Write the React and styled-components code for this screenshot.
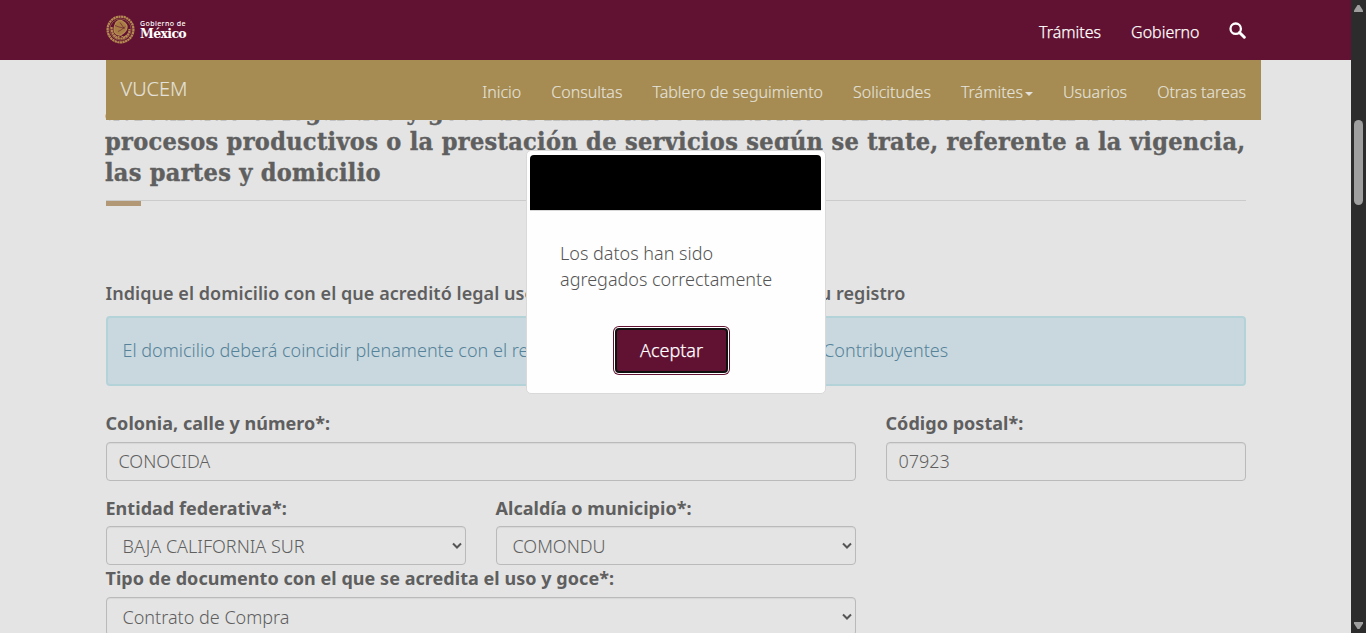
import React from "react";
import styled, { createGlobalStyle } from "styled-components";

const Global = createGlobalStyle`
  *, *::before, *::after { box-sizing: border-box; }
  html, body { margin: 0; padding: 0; overflow: hidden; }
  body { font-family: "Noto Sans", "Open Sans", sans-serif; font-weight: 300; font-size: 18px; color: #5f5f5f; background: #e4e4e4; }
`;

const Screen = styled.div`
  display: grid;
  grid-template-columns: 1fr 15px;
  height: 633px;
  overflow: hidden;
`;

const Page = styled.div`
  display: flex;
  flex-direction: column;
  height: 633px;
  overflow: hidden;
  background: #e4e4e4;
`;

const Header = styled.header`
  flex: none;
  height: 60px;
  background: #611232;
  color: #fff;
  display: flex;
  justify-content: space-between;
  padding: 0 105px 0 106px;
`;

const Brand = styled.a`
  display: flex;
  align-items: flex-start;
  gap: 5px;
  padding-top: 15px;
`;

const BrandName = styled.span`
  display: flex;
  flex-direction: column;
  padding-top: 5px;
  font-family: "DejaVu Serif", "Liberation Serif", serif;
  font-weight: 700;
  white-space: nowrap;
`;

const BrandSmall = styled.span`
  font-family: "Noto Sans", sans-serif;
  font-size: 7px;
  line-height: 8px;
  letter-spacing: 0.4px;
  font-weight: 500;
`;

const BrandLarge = styled.span`
  font-size: 12.5px;
  line-height: 11px;
  letter-spacing: -0.65px;
`;

const HeaderLinks = styled.nav`
  display: flex;
  gap: 30px;
  padding-top: 20px;
`;

const HeaderLink = styled.a`
  position: relative;
  left: 0.5px;
  font-size: 16px;
  line-height: 24px;
  font-weight: 300;
  white-space: nowrap;
  -webkit-text-stroke: 0.25px #fff;
`;

const SearchIcon = styled.svg`
  display: block;
  margin-top: 2px;
`;

const SubNav = styled.nav`
  flex: none;
  position: relative;
  z-index: 2;
  height: 60px;
  width: 1155px;
  margin-left: 106px;
  padding: 0 15px 0 14.5px;
  display: flex;
  justify-content: space-between;
  background: #a68b52;
  color: #e4e1da;
  -webkit-text-stroke: 0.15px #e4e1da;
`;

const SubBrand = styled.a`
  font-size: 20px;
  line-height: 28px;
  padding-top: 15px;
`;

const SubLinks = styled.div`
  display: flex;
  gap: 30px;
  padding-top: 20px;
`;

const SubLink = styled.a`
  display: flex;
  align-items: center;
  height: 24px;
  font-size: 16px;
  white-space: nowrap;
`;

const Caret = styled.span`
  margin: 3px 0 0 2px;
  border: 4px solid transparent;
  border-top-color: #e4e1da;
  border-bottom: 0;
`;

const Content = styled.main`
  width: 1140px;
  margin-left: 106px;
`;

const Heading = styled.h3`
  margin: -24px 0 0;
  padding-bottom: 12px;
  border-bottom: 1px solid #cbcbcb;
  font-family: "DejaVu Serif Condensed", "DejaVu Serif", serif;
  font-weight: 700;
  font-size: 25px;
  line-height: 31px;
  -webkit-text-stroke: 0.4px #5f5f5f;
`;

const HeadingLine = styled.span`
  display: block;
  white-space: nowrap;
  margin-left: -1px;
  letter-spacing: ${(p) => p.$track || 0}px;

  &:first-child {
    margin-bottom: -1px;
  }
`;

const Accent = styled.div`
  width: 35px;
  height: 5px;
  background: #b39875;
`;

const Subtitle = styled.p`
  margin: 74px 0 0 -0.5px;
  font-weight: 600;
  line-height: 26px;
  white-space: nowrap;
  letter-spacing: 0.045px;
`;

const Alert = styled.div`
  height: 70px;
  margin-top: 10px;
  padding: 19px 14.5px;
  border: 2px solid #b3d3d9;
  border-radius: 4px;
  background: #c9d8df;
  color: #568399;
  line-height: 26px;
  white-space: nowrap;
`;

const Row = styled.div`
  display: flex;
  gap: 30px;
  margin-top: ${(p) => p.$top}px;
`;

const Field = styled.div`
  display: flex;
  flex-direction: column;
  width: ${(p) => p.$w}px;
`;

const Label = styled.label`
  font-weight: 700;
  line-height: 26px;
  margin-left: -0.5px;
  margin-bottom: ${(p) => p.$gap || 6}px;
  white-space: nowrap;
  letter-spacing: 0.04px;
`;

const Control = styled.div`
  display: flex;
  align-items: center;
  justify-content: space-between;
  height: 39px;
  padding: 0 3px ${(p) => (p.$select ? 0 : 1)}px ${(p) => (p.$select ? 15.5 : 11.5)}px;
  border: 1px solid #bababa;
  border-radius: 4px;
  box-shadow: inset 0 1px 1px rgba(0, 0, 0, 0.06);
`;

const Scrollbar = styled.aside`
  height: 633px;
  background: #2c2c2c;
  display: flex;
  flex-direction: column;
  align-items: center;
  justify-content: space-between;
  padding: 5px 0 4px;
`;

const Thumb = styled.div`
  width: 9px;
  height: 85px;
  border-radius: 5px;
  background: #9f9f9f;
  margin: 108px 0 auto;
`;

const Modal = styled.section`
  position: absolute;
  z-index: 3;
  left: 526px;
  top: 150px;
  width: 300px;
  height: 244px;
  padding: 4px 4px 0 3px;
  border: 1px solid #d9d9d9;
  border-radius: 5px;
  background: #fefefe;
  display: flex;
  flex-direction: column;
`;

const ModalTitle = styled.div`
  height: 56px;
  border-radius: 4px 4px 0 0;
  border-bottom: 1px solid #d8d8d8;
  background: #000;
  background-clip: padding-box;
`;

const ModalText = styled.p`
  margin: 29px 0 0 30px;
  line-height: 26px;
  color: #555;
  white-space: nowrap;
`;

const AcceptButton = styled.button`
  align-self: center;
  margin: 36px 8px 0 0;
  width: 113px;
  height: 45px;
  padding: 0 0 1px;
  border: 2px solid #101010;
  border-radius: 4px;
  background: #611232;
  box-shadow: 0 0 0 1px #fff, 0 0 0 2px #611232;
  color: #fff;
  font: 300 18px/26px "Noto Sans", sans-serif;
  -webkit-text-stroke: 0.25px #fff;
`;

function Seal() {
  return (
    <svg width="29" height="29" viewBox="0 0 29 29" fill="none" stroke="#b58b52">
      <circle cx="14.5" cy="14.5" r="12.9" strokeWidth="2.3" strokeDasharray="2.2 .45" />
      <circle cx="14.5" cy="14.5" r="10.7" strokeWidth=".5" />
      <path d="M5.5 12c0 8 4 11.5 9 11.5s9-3.5 9-9.5" strokeWidth="2.2" strokeDasharray="2.3 .4" />
      <path d="M10 7.5c2-2 5-2.500 7-1 2 1.200 4.500 3 4 6-.4 3-2.200 5-4.600 6.500-2.400 1.500-6.200 1-7.600-1.500-1.500-2.600-.8-6 1.200-10z" fill="#a87c45" strokeWidth="1.3" />
      <path d="M9 10.5l4 1.500 4.500 1M12 16.500l3-1.500 4.300-3.300M14 7.500l2.500 3.500 2 3" stroke="#611232" strokeWidth=".6" />
      <path d="M8.5 20l3 2 3-1.500 3 1.500 3.500-2" strokeWidth="1" />
    </svg>
  );
}

function Chevron() {
  return (
    <svg width="10" height="8" viewBox="0 0 10 8" fill="none" stroke="#555" strokeWidth="2">
      <path d="M1 1.500L5 5.500L9 1.500" />
    </svg>
  );
}

function ScrollArrow({ down }) {
  return (
    <svg width="9" height="7" viewBox="0 0 9 7" fill="#9f9f9f">
      <path d={down ? "M0 0H9V1.500L5.500 7H3.500L0 1.500Z" : "M0 7H9V5.500L5.500 0H3.500L0 5.500Z"} />
    </svg>
  );
}

function Select({ label, value, width, gap }) {
  return (
    <Field $w={width}>
      <Label $gap={gap}>{label}</Label>
      <Control $select>
        <span>{value}</span>
        <Chevron />
      </Control>
    </Field>
  );
}

function Input({ label, value, width }) {
  return (
    <Field $w={width}>
      <Label>{label}</Label>
      <Control>{value}</Control>
    </Field>
  );
}

export default function App() {
  return (
    <Screen>
      <Global />
      <Page>
        <Header>
          <Brand>
            <Seal />
            <BrandName>
              <BrandSmall>Gobierno de</BrandSmall>
              <BrandLarge>México</BrandLarge>
            </BrandName>
          </Brand>
          <HeaderLinks>
            <HeaderLink>Trámites</HeaderLink>
            <HeaderLink>Gobierno</HeaderLink>
            <SearchIcon width="17" height="17" viewBox="0 0 17 17" fill="none" stroke="#fff">
              <circle cx="6.7" cy="6.7" r="5.2" strokeWidth="2.3" />
              <path d="M10.5 10.5L15.3 15.2" strokeWidth="3" strokeLinecap="round" />
            </SearchIcon>
          </HeaderLinks>
        </Header>
        <SubNav>
          <SubBrand>VUCEM</SubBrand>
          <SubLinks>
            <SubLink>Inicio</SubLink>
            <SubLink>Consultas</SubLink>
            <SubLink>Tablero de seguimiento</SubLink>
            <SubLink>Solicitudes</SubLink>
            <SubLink>Trámites<Caret /></SubLink>
            <SubLink>Usuarios</SubLink>
            <SubLink>Otras tareas</SubLink>
          </SubLinks>
        </SubNav>
        <Content>
          <Heading>
            <HeadingLine $track={0.3}>acreditado el legal uso y goce del inmueble o inmuebles en donde se lleven a cabo los</HeadingLine>
            <HeadingLine $track={0.32}>procesos productivos o la prestación de servicios según se trate, referente a la vigencia,</HeadingLine>
            <HeadingLine $track={0.3}>las partes y domicilio</HeadingLine>
          </Heading>
          <Accent />
          <Subtitle>Indique el domicilio con el que acreditó legal uso y goce al momento de realizar su registro</Subtitle>
          <Alert>El domicilio deberá coincidir plenamente con el registrado ante el Registro Federal de Contribuyentes</Alert>
          <Row $top={24}>
            <Input label="Colonia, calle y número*:" value="CONOCIDA" width={750} />
            <Input label="Código postal*:" value="07923" width={360} />
          </Row>
          <Row $top={14}>
            <Select label="Entidad federativa*:" value="BAJA CALIFORNIA SUR" width={360} gap={5} />
            <Select label="Alcaldía o municipio*:" value="COMONDU" width={360} gap={5} />
          </Row>
          <Row $top={0}>
            <Select label="Tipo de documento con el que se acredita el uso y goce*:" value="Contrato de Compra" width={750} gap={6} />
          </Row>
        </Content>
      </Page>
      <Scrollbar>
        <ScrollArrow />
        <Thumb />
        <ScrollArrow down />
      </Scrollbar>
      <Modal>
        <ModalTitle />
        <ModalText>
          Los datos han sido
          <br />
          agregados correctamente
        </ModalText>
        <AcceptButton>Aceptar</AcceptButton>
      </Modal>
    </Screen>
  );
}
